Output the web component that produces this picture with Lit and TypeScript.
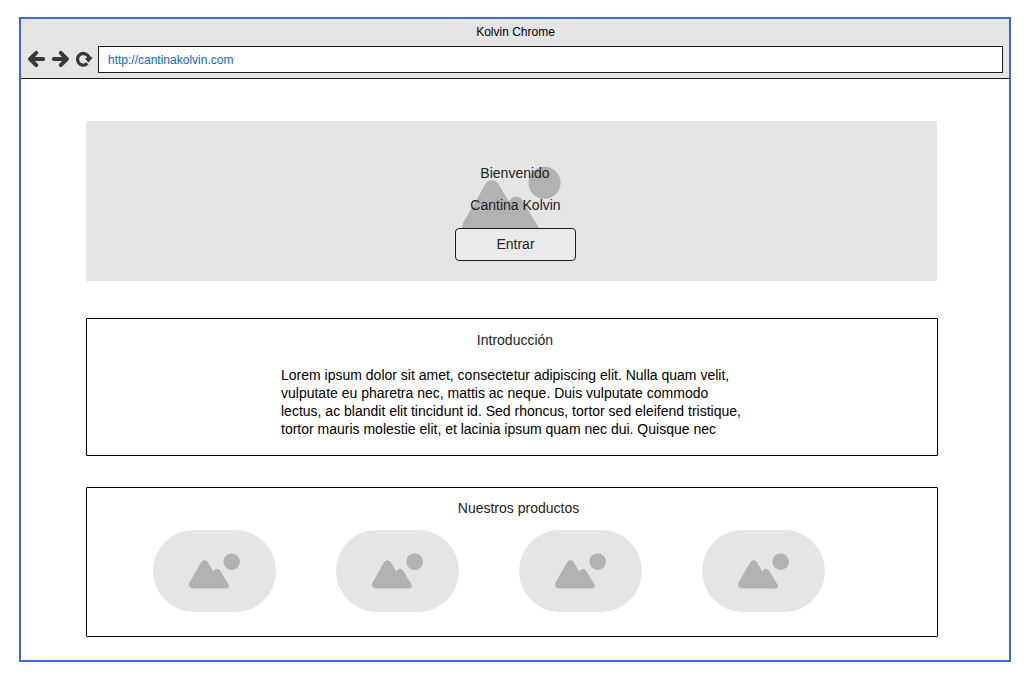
import { LitElement, html, css, svg } from "lit";
import { customElement } from "lit/decorators.js";

const mountains = svg`
  <path d="M11.6 3.2C13.4-.6 17.6-.6 19.4 3.2L24.3 11.4C26 8 29.6 7.9 31.3 10.8L39.3 24.3C40.8 26.8 39.5 28.5 37 28.5H4C.5 28.5-.9 25.6.6 22.4Z"/>
  <circle cx="42.7" cy="1.7" r="8.3"/>`;

@customElement("image-placeholder")
class ImagePlaceholder extends LitElement {
  static styles = css`
    :host { display: block; }
    .picture { display: block; width: 100%; height: 100%; fill: #b2b2b2; }
  `;
  render() {
    return html`<svg class="picture" viewBox="0 -7 51.2 36">${mountains}</svg>`;
  }
}

@customElement("app-root")
class AppRoot extends LitElement {
  static styles = css`
    :host {
      display: block;
      box-sizing: border-box;
      height: 674px;
      padding: 17px 23px 12px 19px;
      background: #fff;
      color: #222;
      font: 14px/18px "Liberation Sans", Arial, sans-serif;
    }
    * { box-sizing: border-box; }
    .window {
      height: 645px;
      border: 2px solid #4169d2;
      display: flex;
      flex-direction: column;
    }
    .chrome {
      height: 60px;
      flex: none;
      background: #e5e5e5;
      border-bottom: 1px solid #1c1c1c;
    }
    .title {
      height: 27px;
      padding: 4px 0 0 1px;
      text-align: center;
      font-size: 12px;
      color: #000;
    }
    .bar { display: flex; padding: 0 6px 0 7px; }
    .nav { width: 70px; height: 27px; flex: none; }
    .address {
      flex: 1;
      height: 27px;
      border: 1px solid #1c1c1c;
      background: #fff;
      padding: 4px 9px;
      font-size: 12px;
      color: #1064e0;
    }
    .page { display: flex; flex-direction: column; padding: 42px 71px 0 65px; }
    .hero {
      width: 851px;
      height: 160px;
      background: #e5e5e5;
      display: grid;
      justify-items: center;
    }
    .hero > * { grid-area: 1 / 1; }
    .backdrop { width: 99px; height: 69.6px; margin: 45.2px 0 0 0.6px; }
    .welcome {
      display: flex;
      flex-direction: column;
      align-items: center;
      padding: 43px 0 0 8px;
      z-index: 1;
    }
    .line { height: 32px; }
    .greeting { padding-right: 1px; }
    .enter {
      width: 121px;
      height: 33px;
      border: 1px solid #1c1c1c;
      border-radius: 4px;
      background: #eaeaea;
      color: #222;
      font: inherit;
      padding: 0 0 2px;
    }
    .panel { width: 852px; border: 1px solid #000; border-radius: 1px; }
    .intro { height: 138px; margin-top: 37px; }
    .products { height: 150px; margin-top: 31px; }
    .heading { margin: 0; font: inherit; text-align: center; }
    .intro .heading { padding: 12px 0 0 6px; }
    .products .heading { padding: 11px 0 0 13px; }
    .copy { margin: 17px 0 0 194px; color: #000; white-space: nowrap; }
    .gallery { display: flex; gap: 60px; margin: 13px 0 0 66px; }
    .pill {
      width: 123px;
      height: 82px;
      border-radius: 41px;
      background: #e5e5e5;
      padding: 23px 0 0 36px;
    }
    .thumb { width: 51.2px; height: 36px; }
  `;

  render() {
    return html`
      <div class="window">
        <header class="chrome">
          <div class="title">Kolvin Chrome</div>
          <div class="bar">
            <svg class="nav" viewBox="28 46 70 27" fill="none" stroke="#383838" stroke-width="4" stroke-linecap="round" stroke-linejoin="round">
              <path d="M43.2 59H31.5M36.2 52.9L30.1 59L36.2 65.1"/>
              <path d="M53.8 59H65.5M60.8 52.9L66.9 59L60.8 65.1"/>
              <path stroke-width="3.3" stroke-linecap="butt" d="M87.4 63.4A5.8 5.8 0 1 1 88.9 57.8"/>
              <path fill="#383838" stroke="none" d="M84.8 58.4L91.4 56.4L92.3 58L88.6 62.6Z"/>
            </svg>
            <div class="address">http://cantinakolvin.com</div>
          </div>
        </header>
        <main class="page">
          <section class="hero">
            <image-placeholder class="backdrop"></image-placeholder>
            <div class="welcome">
              <div class="line greeting">Bienvenido</div>
              <div class="line">Cantina Kolvin</div>
              <button class="enter">Entrar</button>
            </div>
          </section>
          <section class="panel intro">
            <h2 class="heading">Introducción</h2>
            <p class="copy">
              Lorem ipsum dolor sit amet, consectetur adipiscing elit. Nulla quam velit,<br />
              vulputate eu pharetra nec, mattis ac neque. Duis vulputate commodo<br />
              lectus, ac blandit elit tincidunt id. Sed rhoncus, tortor sed eleifend tristique,<br />
              tortor mauris molestie elit, et lacinia ipsum quam nec dui. Quisque nec
            </p>
          </section>
          <section class="panel products">
            <h2 class="heading">Nuestros productos</h2>
            <div class="gallery">
              ${[0, 1, 2, 3].map(() => html`<div class="pill"><image-placeholder class="thumb"></image-placeholder></div>`)}
            </div>
          </section>
        </main>
      </div>
    `;
  }
}
